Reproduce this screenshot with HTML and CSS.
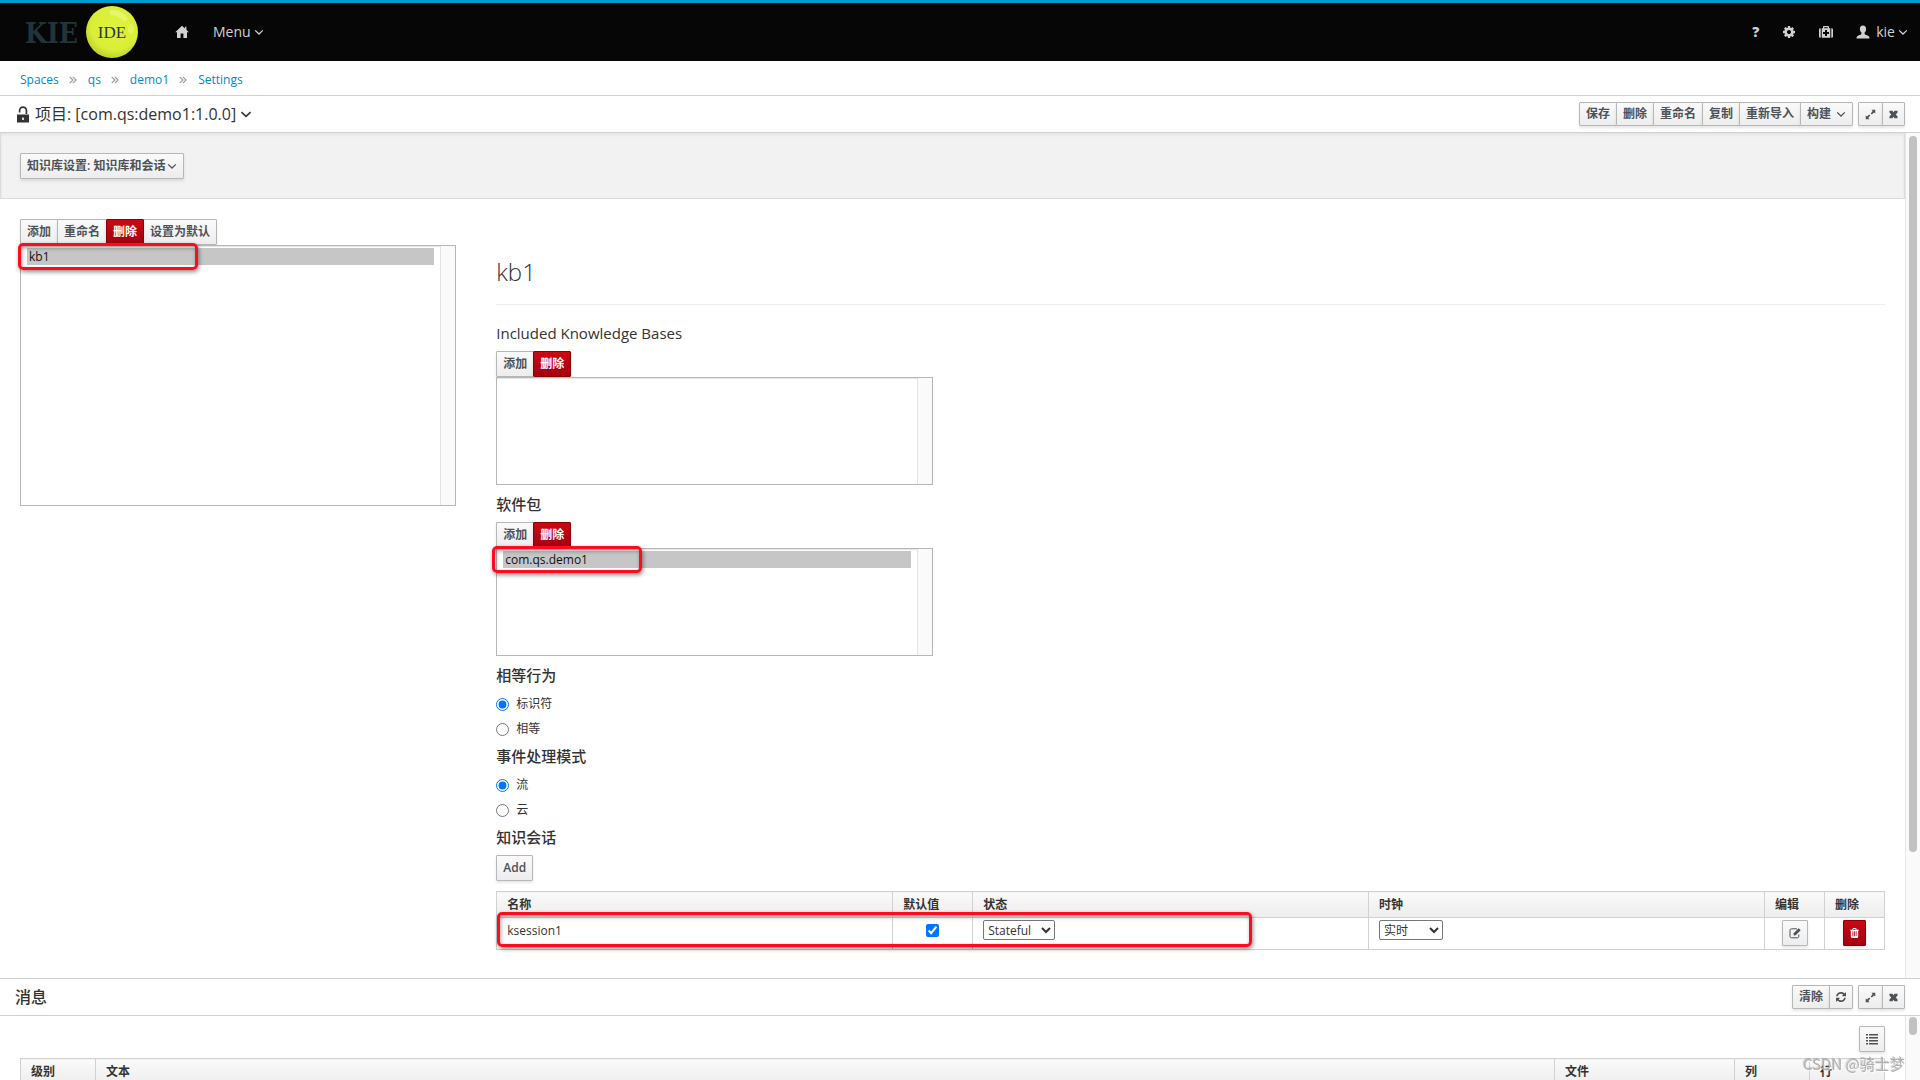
FILE: index.html
```html
<!DOCTYPE html>
<html lang="zh-CN">
<head>
<meta charset="utf-8">
<title>KIE IDE</title>
<link rel="stylesheet" href="styles.css">
</head>
<body>
<svg class="sprite" aria-hidden="true">
  <symbol id="chevron" viewBox="0 0 10 10"><path d="M1.2 3.4 5 7l3.800-3.600" fill="none" stroke="currentColor" stroke-width="1.300"/></symbol>
  <symbol id="raquo" viewBox="0 0 8 8"><path d="M.7.8 3.900 4 .7 7.200M3.900.8 7.100 4 3.900 7.200" fill="none" stroke="currentColor" stroke-width="1.200"/></symbol>
  <symbol id="home" viewBox="0 0 14 14"><path d="M7 .7.200 7.300h1.800v5.800h3.600V8.600h2.800v4.500h3.600V7.300h1.800L11.400 4.800V1.700H9.900v1.700z" fill="currentColor"/></symbol>
  <symbol id="gear" viewBox="0 0 1536 1792"><path fill="currentColor" d="M1024 896q0-106-75-181t-181-75-181 75-75 181 75 181 181 75 181-75 75-181zm512-109v222q0 12-8 23t-20 13l-185 28q-19 54-39 91 35 50 107 138 10 12 10 25t-9 23q-27 37-99 108t-94 71q-12 0-26-9l-138-108q-44 23-91 38-16 136-29 186-7 28-36 28h-222q-14 0-24.500-8.500t-11.500-21.500l-28-184q-49-16-90-37l-141 107q-10 9-25 9-14 0-25-11-126-114-165-168-7-10-7-23 0-12 8-23 15-21 51-66.500t54-70.500q-27-50-41-99l-183-27q-13-2-21-12.500t-8-23.500v-222q0-12 8-23t19-13l186-28q14-46 39-92-40-57-107-138-10-12-10-24 0-10 9-23 26-36 98.500-107.500t94.500-71.500q13 0 26 10l138 107q44-23 91-38 16-136 29-186 7-28 36-28h222q14 0 24.500 8.500t11.500 21.500l28 184q49 16 90 37l142-107q9-9 24-9 13 0 25 10 129 119 165 170 7 8 7 22 0 12-8 23-15 21-51 66.500t-54 70.500q26 50 41 98l183 28q13 2 21 12.500t8 23.500z"/></symbol>
  <symbol id="medkit" viewBox="0 0 14 14"><path fill="currentColor" fill-rule="evenodd" d="M1.700 3.200v9.600h-.3Q0 12.800 0 11.400V4.600Q0 3.200 1.400 3.200zM12.300 3.200h.3Q14 3.200 14 4.600v6.800q0 1.400-1.400 1.400h-.3zM2.700 3.200H4V1.800Q4 1 4.800 1h4.400q.8 0 .8.800v1.400h1.300v9.600H2.700zM5.200 2.200v1h3.600v-1zM6 5v2H4v2h2v2h2V9h2V7H8V5z"/></symbol>
  <symbol id="user" viewBox="0 0 14 14"><path fill="currentColor" d="M7 .6c2 0 3.100 1.500 3.100 3.400 0 1.600-.6 2.800-1.500 3.600v1.300c0 .5 1.400.9 2.900 1.500 1.400.6 2 1.300 2 3.100H.5c0-1.800.6-2.500 2-3.100C4 9.800 5.400 9.400 5.400 8.900V7.600C4.500 6.800 3.900 5.600 3.900 4 3.900 2.100 5 .6 7 .6z"/></symbol>
  <symbol id="lock" viewBox="0 0 12 17"><path d="M2.600 6.500V4.500a3.400 3.400 0 0 1 6.800 0V8" fill="none" stroke="currentColor" stroke-width="1.700"/><path fill="currentColor" fill-rule="evenodd" d="M0 8.500h12v8H0zM5.200 11.500v2.500h1.600v-2.500z"/></symbol>
  <symbol id="expand" viewBox="0 0 12 12"><path fill="currentColor" d="M7 .8h4.200V5L9.800 3.700 7.500 6 6.300 4.800 8.400 2.200zM5 11.200H.8V7l1.400 1.300L4.500 6l1.200 1.200-2.100 2.600z"/></symbol>
  <symbol id="close" viewBox="0 0 10 10"><path fill="currentColor" d="M.5.8h3.300L5 2.600 6.200.8h3.300v2L7.500 5l2 2.200v2H6.200L5 7.400 3.800 9.200H.5v-2L2.500 5l-2-2.200z"/></symbol>
  <symbol id="refresh" viewBox="0 0 1536 1792"><path fill="currentColor" d="M1511 1056q0 5-1 7-64 268-268 434.500t-478 166.500q-146 0-282.500-55t-243.500-157l-129 129q-19 19-45 19t-45-19-19-45v-448q0-26 19-45t45-19h448q26 0 45 19t19 45-19 45l-137 137q71 66 161 102t187 36q134 0 250-65t186-179q11-17 53-117 8-23 30-23h192q13 0 22.500 9.500t9.500 22.500zm25-800v448q0 26-19 45t-45 19h-448q-26 0-45-19t-19-45 19-45l138-138q-148-137-349-137-134 0-250 65t-186 179q-11 17-53 117-8 23-30 23h-199q-13 0-22.500-9.500t-9.500-22.500v-7q65-268 270-434.500t480-166.500q146 0 284 55.500t245 156.500l130-129q19-19 45-19t45 19 19 45z"/></symbol>
  <symbol id="edit" viewBox="0 0 12 12"><path d="M8 1.800H2.500Q1 1.800 1 3.300v6Q1 10.800 2.500 10.800h5.800Q9.800 10.800 9.800 9.300V7.500" fill="none" stroke="currentColor"/><path d="M4.700 8.400V6.300l5-5 2 2-5 5z" fill="currentColor"/></symbol>
  <symbol id="trash" viewBox="0 0 1408 1536"><path transform="translate(0 -128)" fill="currentColor" d="M512 1376v-704q0-14-9-23t-23-9h-64q-14 0-23 9t-9 23v704q0 14 9 23t23 9h64q14 0 23-9t9-23zm256 0v-704q0-14-9-23t-23-9h-64q-14 0-23 9t-9 23v704q0 14 9 23t23 9h64q14 0 23-9t9-23zm256 0v-704q0-14-9-23t-23-9h-64q-14 0-23 9t-9 23v704q0 14 9 23t23 9h64q14 0 23-9t9-23zm-544-992h448l-48-117q-7-9-17-11h-317q-10 2-17 11zm928 32v64q0 14-9 23t-23 9h-96v948q0 83-47 143.500t-113 60.500h-832q-66 0-113-58.500t-47-141.500v-952h-96q-14 0-23-9t-9-23v-64q0-14 9-23t23-9h309l70-167q15-37 54-63t79-26h320q40 0 79 26t54 63l70 167h309q14 0 23 9t9 23z"/></symbol>
  <symbol id="list" viewBox="0 0 12 12"><path fill="currentColor" d="M0 1h2v1.600H0zM3 1h9v1.600H3zM0 4h2v1.600H0zM3 4h9v1.600H3zM0 7h2v1.600H0zM3 7h9v1.600H3zM0 10h2v1.600H0zM3 10h9v1.600H3z"/></symbol>
</svg>

<header class="navbar">
  <a class="logo" href="#" aria-label="KIE IDE">
    <svg width="116" height="56" viewBox="0 0 116 56">
      <defs>
        <radialGradient id="ball" cx="55%" cy="40%" r="60%">
          <stop offset="0" stop-color="#dff23c"/><stop offset=".75" stop-color="#daee38"/><stop offset="1" stop-color="#c0d22c"/>
        </radialGradient>
      </defs>
      <text class="logo-kie" x="-1" y="39">KIE</text>
      <circle cx="86" cy="28" r="26" fill="url(#ball)"/>
      <path d="M84 6q14 0 18 9l-4 3q-5-7-14-7z" fill="#eaf67a" opacity=".8"/>
      <ellipse cx="105" cy="25" rx="3" ry="5" fill="#eaf67a" opacity=".6"/>
      <text class="logo-ide" x="86" y="34">IDE</text>
    </svg>
  </a>
  <a class="nav-home" href="#" aria-label="Home"><svg class="i14"><use href="#home"/></svg></a>
  <button class="nav-item" type="button">Menu<svg class="i10"><use href="#chevron"/></svg></button>
  <div class="nav-right">
    <button class="nav-item nav-help" type="button">?</button>
    <button class="nav-item" type="button" aria-label="Settings"><svg class="i14"><use href="#gear"/></svg></button>
    <button class="nav-item" type="button" aria-label="Tools"><svg class="i14"><use href="#medkit"/></svg></button>
    <button class="nav-item nav-user" type="button"><svg class="i14"><use href="#user"/></svg>kie<svg class="i10"><use href="#chevron"/></svg></button>
  </div>
</header>

<nav class="breadcrumb" aria-label="Breadcrumb">
  <a href="#">Spaces</a><svg><use href="#raquo"/></svg>
  <a href="#">qs</a><svg><use href="#raquo"/></svg>
  <a href="#">demo1</a><svg><use href="#raquo"/></svg>
  <a href="#">Settings</a>
</nav>

<div class="titlebar">
  <svg class="lock"><use href="#lock"/></svg>
  <button class="title" type="button">项目: [com.qs:demo1:1.0.0]<svg class="i12"><use href="#chevron"/></svg></button>
  <div class="actions">
    <div class="group small">
      <button class="btn" type="button">保存</button><button class="btn" type="button">删除</button><button class="btn" type="button">重命名</button><button class="btn" type="button">复制</button><button class="btn" type="button">重新导入</button><button class="btn btn-menu" type="button">构建<svg class="i10"><use href="#chevron"/></svg></button>
    </div>
    <div class="group small">
      <button class="btn" type="button" aria-label="最大化"><svg class="i11"><use href="#expand"/></svg></button><button class="btn" type="button" aria-label="关闭"><svg class="i9"><use href="#close"/></svg></button>
    </div>
  </div>
</div>

<main class="pane editor">
  <div class="pane-body">
    <div class="section-bar"><button class="btn btn-section" type="button">知识库设置: 知识库和会话<svg class="i10"><use href="#chevron"/></svg></button></div>
    <div class="columns">
      <section class="bases">
        <div class="group">
          <button class="btn" type="button">添加</button><button class="btn" type="button">重命名</button><button class="btn danger" type="button">删除</button><button class="btn" type="button">设置为默认</button>
        </div>
        <div class="listbox">
          <select class="tall" size="12" aria-label="知识库"><option selected>kb1</option></select>
          <span class="list-track"></span>
          <span class="mark mark-base"></span>
        </div>
      </section>

      <section class="details">
        <h1>kb1</h1>
        <h2>Included Knowledge Bases</h2>
        <div class="group"><button class="btn" type="button">添加</button><button class="btn danger" type="button">删除</button></div>
        <div class="listbox narrow">
          <select size="5" aria-label="Included Knowledge Bases"></select>
          <span class="list-track"></span>
        </div>

        <h2>软件包</h2>
        <div class="group"><button class="btn" type="button">添加</button><button class="btn danger" type="button">删除</button></div>
        <div class="listbox narrow">
          <select size="5" aria-label="软件包"><option selected>com.qs.demo1</option></select>
          <span class="list-track"></span>
          <span class="mark mark-package"></span>
        </div>

        <h2>相等行为</h2>
        <div class="radios">
          <label><input type="radio" name="equals" checked>标识符</label>
          <label><input type="radio" name="equals">相等</label>
        </div>

        <h2>事件处理模式</h2>
        <div class="radios">
          <label><input type="radio" name="events" checked>流</label>
          <label><input type="radio" name="events">云</label>
        </div>

        <h2>知识会话</h2>
        <div class="group"><button class="btn" type="button">Add</button></div>
        <div class="sessions">
          <table>
            <colgroup><col><col class="w80"><col><col><col class="w60"><col class="w60"></colgroup>
            <thead><tr><th>名称</th><th>默认值</th><th>状态</th><th>时钟</th><th>编辑</th><th>删除</th></tr></thead>
            <tbody><tr>
              <td><span class="cell-text">ksession1</span></td>
              <td class="center"><input type="checkbox" checked aria-label="默认值"></td>
              <td><select class="drop" aria-label="状态"><option>Stateful</option></select></td>
              <td><select class="drop clock" aria-label="时钟"><option>实时</option></select></td>
              <td class="center"><button class="btn" type="button" aria-label="编辑"><svg class="i12"><use href="#edit"/></svg></button></td>
              <td class="center"><button class="btn danger" type="button" aria-label="删除"><svg class="trash"><use href="#trash"/></svg></button></td>
            </tr></tbody>
          </table>
          <span class="mark mark-session"></span>
        </div>
      </section>
    </div>
  </div>
  <div class="track"><span class="thumb thumb-editor"></span></div>
</main>

<section class="messages">
  <div class="titlebar messages-bar">
    <h2 class="messages-title">消息</h2>
    <div class="actions">
      <div class="group small">
        <button class="btn" type="button">清除</button><button class="btn" type="button" aria-label="刷新"><svg class="i10"><use href="#refresh"/></svg></button>
      </div>
      <div class="group small">
        <button class="btn" type="button" aria-label="最大化"><svg class="i11"><use href="#expand"/></svg></button><button class="btn" type="button" aria-label="关闭"><svg class="i9"><use href="#close"/></svg></button>
      </div>
    </div>
  </div>
  <div class="pane log">
    <div class="pane-body log-body">
      <button class="btn" type="button" aria-label="列"><svg class="i12"><use href="#list"/></svg></button>
      <table>
        <colgroup><col class="w75"><col><col class="w180"><col class="w75"><col class="w75"></colgroup>
        <thead><tr><th>级别</th><th>文本</th><th>文件</th><th>列</th><th>行</th></tr></thead>
      </table>
    </div>
    <div class="track"><span class="thumb"></span></div>
  </div>
</section>
<div class="watermark">CSDN @骑士梦</div>
</body>
</html>
```
FILE: styles.css
```css
* { box-sizing: border-box; }

body {
  margin: 0;
  height: 100vh;
  overflow: hidden;
  display: flex;
  flex-direction: column;
  background: #fff;
  color: #333;
  font: 12px/16px "Open Sans", "Noto Sans CJK SC", sans-serif;
}

button, select, input { font: inherit; color: inherit; margin: 0; }
button { cursor: pointer; }
svg { display: block; flex: none; }
.sprite { position: absolute; width: 0; height: 0; }
.i9 { width: 9px; height: 9px; }
.i10 { width: 10px; height: 12px; }
.i11 { width: 11px; height: 11px; }
.i12 { width: 12px; height: 12px; }
.i14 { width: 14px; height: 14px; }
.trash { width: 9px; height: 12px; }

/* top navigation */
.navbar {
  display: flex;
  align-items: center;
  flex: none;
  height: 61px;
  padding: 0 12px 0 26px;
  border-top: 3px solid #0099d3;
  background: #060606;
  color: #d1d1d1;
}
.logo svg { overflow: visible; }
.logo-kie { font: bold 28px "DejaVu Serif Condensed", "DejaVu Serif", serif; fill: #22343a; }
.logo-ide { font: 17px "Liberation Serif", serif; fill: #26383a; text-anchor: middle; }
.nav-home { margin: 0 24px 0 33px; color: inherit; }
.nav-item {
  display: flex;
  align-items: center;
  gap: 3px;
  padding: 0;
  border: 0;
  background: none;
  font-size: 14px;
  line-height: 20px;
}
.nav-right { display: flex; align-items: center; gap: 23px; margin-left: auto; }
.nav-help { font-weight: 800; }
.nav-user svg:first-child { margin-right: 3px; }

/* breadcrumb */
.breadcrumb {
  display: flex;
  align-items: center;
  flex: none;
  height: 35px;
  padding: 3px 20px 0;
  border-bottom: 1px solid #d1d1d1;
}
.breadcrumb a { color: #0088ce; text-decoration: none; }
.breadcrumb svg { width: 8px; height: 8px; margin: 0 11px 0 10px; color: #9c9c9c; }

/* panel headers */
.titlebar {
  display: flex;
  align-items: center;
  flex: none;
  height: 37px;
  padding: 0 15px 0 17px;
  border-bottom: 1px solid #d1d1d1;
}
.lock { width: 12px; height: 17px; margin-right: 6px; }
.title {
  display: flex;
  align-items: center;
  gap: 4px;
  padding: 0;
  border: 0;
  background: none;
  font-size: 16px;
  line-height: 20px;
}
.actions { display: flex; gap: 5px; margin-left: auto; }

/* buttons */
.group { display: flex; }
.group .btn + .btn { margin-left: -1px; }
.btn {
  display: inline-flex;
  align-items: center;
  justify-content: center;
  height: 26px;
  padding: 0 6px;
  border: 1px solid #b7b7b7;
  border-radius: 1px;
  background: linear-gradient(#fafafa, #ededed);
  box-shadow: 0 2px 3px rgba(3, 3, 3, .1);
  color: #4d5258;
  font-weight: 600;
  white-space: nowrap;
}
.small .btn { height: 24px; }
.btn-menu { gap: 5px; }
.btn-section { gap: 2px; }
.danger {
  position: relative;
  border-color: #8b0000;
  background: linear-gradient(#cc0814, #a30010);
  color: #fff;
}

/* scrolling panes */
.pane { display: flex; flex: none; }
.pane-body { flex: 1; min-width: 0; }
.track { width: 15px; padding: 3px 2px 0 3px; border-left: 1px solid #e6e6e6; background: #fafafa; }
.thumb { display: block; width: 8px; height: 18px; border-radius: 4px; background: #c1c1c1; }
.thumb-editor { height: 85%; }

.section-bar {
  padding: 20px 19px 19px;
  border: 1px solid #dcdcdc;
  border-top: 0;
  background: #f2f2f2;
  box-shadow: inset 0 2px 3px rgba(3, 3, 3, .06);
}
.columns { display: grid; grid-template-columns: 1fr 3fr; padding-bottom: 28px; }
.bases, .details { min-width: 0; padding: 20px 20px 0; }

h1 {
  margin: 40px 0 20px;
  padding-bottom: 19px;
  border-bottom: 1px solid #ededed;
  font-size: 24px;
  font-weight: 300;
  line-height: 26px;
}
h2 { margin: 11px 0 10px; font-size: 15px; font-weight: 500; line-height: 16px; }

/* list boxes */
.listbox { position: relative; display: flex; border: 1px solid #b7b7b7; background: #fff; box-shadow: inset 0 1px 1px rgba(3, 3, 3, .1); }
.narrow { width: calc((100% + 42px) / 3 - 40px); }
.listbox select {
  flex: 1;
  min-width: 0;
  height: 106px;
  padding: 2px 6px;
  border: 0;
  outline: 0;
  background: none;
  color: #111;
  overflow: hidden;
}
.listbox .tall { height: 259px; }
.listbox option { min-height: 17px; padding: 0 2px; line-height: 17px; }
.listbox option:checked { background: #c6c6c6 linear-gradient(#c6c6c6, #c6c6c6); color: #111; }
.list-track { width: 15px; border-left: 1px solid #e3e3e3; background: #fafafa; }

/* hand-drawn highlight frames */
.mark {
  position: absolute;
  border: 3px solid #fb0d1e;
  border-radius: 5px;
  box-shadow: 1px 2px 4px rgba(0, 0, 0, .45), inset 1px 2px 4px rgba(0, 0, 0, .35);
  pointer-events: none;
}
.mark-base { left: -3px; top: -3px; width: 180px; height: 27px; }
.mark-package { left: -5px; top: -3px; width: 150px; height: 27px; }
.mark-session { left: 1px; top: 21px; width: 755px; height: 35px; }

.radios { display: flex; flex-direction: column; gap: 9px; padding-top: 3px; }
.radios label { display: flex; align-items: center; gap: 7px; }
input[type="radio"], input[type="checkbox"] { width: 13px; height: 13px; accent-color: #0075ff; }

/* tables */
table { width: 100%; table-layout: fixed; border-collapse: collapse; }
th, td { border: 1px solid #d1d1d1; text-align: left; }
th { height: 26px; padding: 0 10px; background: linear-gradient(#fafafa, #ededed); font-weight: 600; }
td { height: 32px; padding: 2px 10px; vertical-align: top; }
.center { text-align: center; }
td.center { padding: 2px 0; }
td .btn { vertical-align: top; }
td input[type="checkbox"] { margin-top: 4px; }
.cell-text { display: block; padding-top: 3px; }
.w60 { width: 60px; }
.w75 { width: 75px; }
.w80 { width: 80px; }
.w180 { width: 180px; }
.sessions { position: relative; margin-top: 10px; }
.drop { display: block; width: 72px; height: 20px; padding: 0; border: 1px solid #767676; border-radius: 2px; background: #fff; }
.clock { width: 64px; }

/* messages */
.messages { display: flex; flex-direction: column; flex: 1 0 auto; border-top: 1px solid #d1d1d1; }
.messages-bar { padding-left: 15px; }
.messages-title { margin: 0; font-size: 16px; }
.log { flex: 1 0 auto; }
.log-body { display: flex; flex-direction: column; align-items: flex-end; gap: 6px; padding: 10px 20px 0; }
.log .track { padding-top: 1px; }

.watermark {
  position: fixed;
  right: 15px;
  bottom: 6px;
  color: #b0b0b0;
  font: 15px/20px "Noto Sans CJK SC", sans-serif;
  text-shadow: 1px 1px 1px rgba(255, 255, 255, .9), -1px -1px 1px rgba(110, 110, 110, .4);
}
```
